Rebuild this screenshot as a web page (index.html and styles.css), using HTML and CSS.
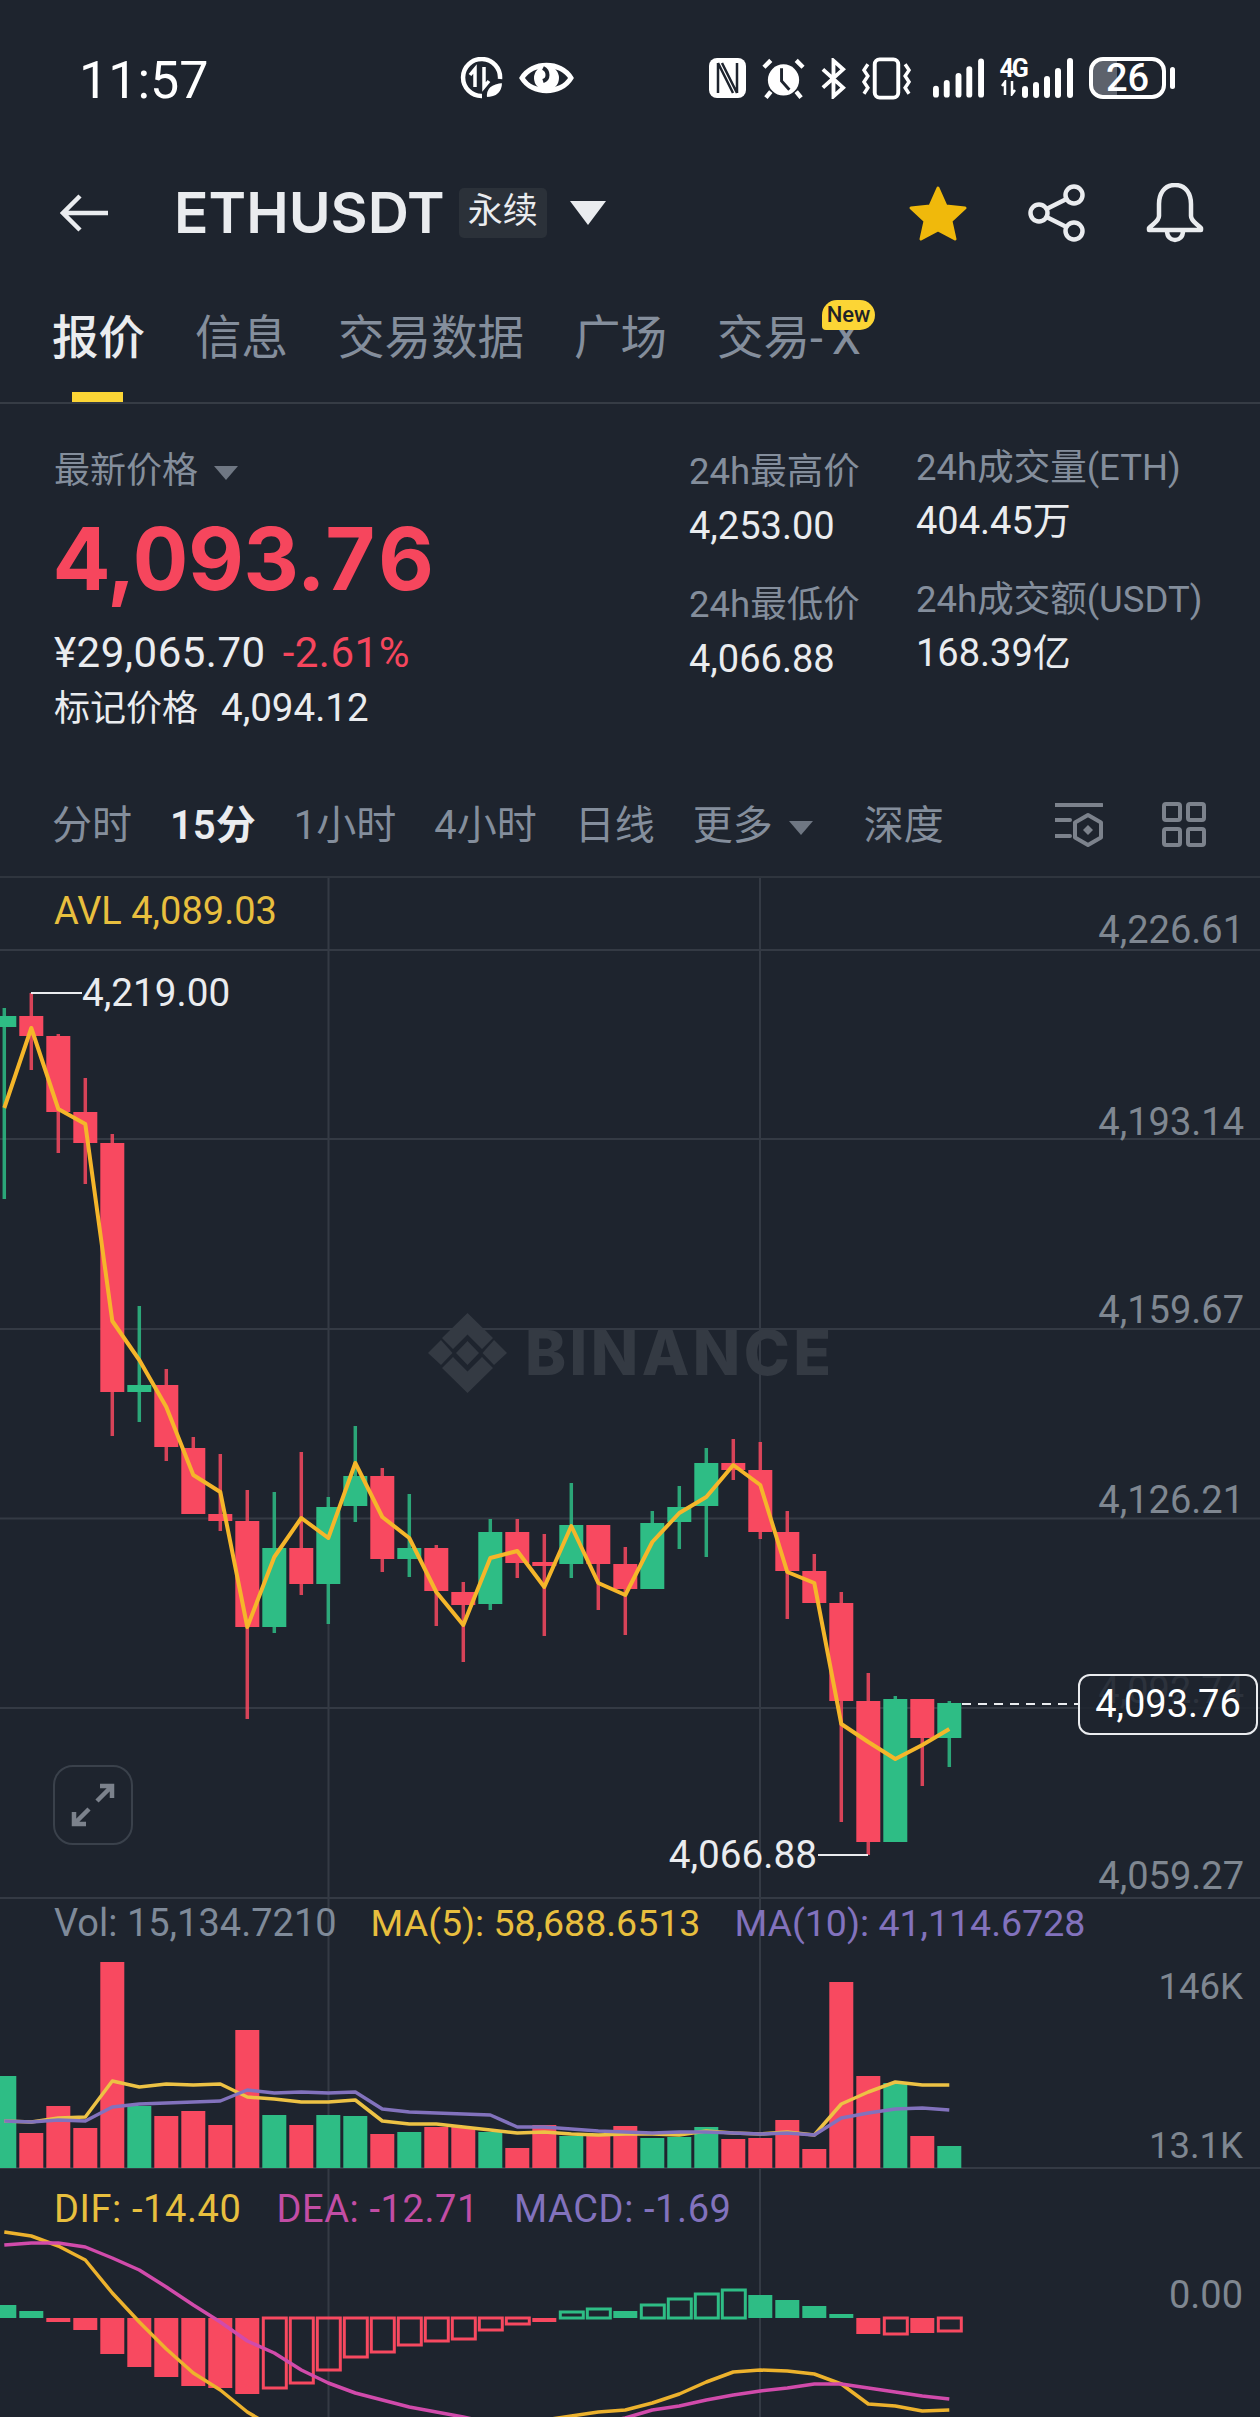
FILE: index.html
```html
<!DOCTYPE html>
<html lang="zh">
<head>
  <meta charset="UTF-8">
  <title>ETHUSDT</title>
  <link rel="stylesheet" href="styles.css">
</head>
<body>

  <div class="status-bar">
    <span class="time">11:57</span>
    <div class="status-left">
      <svg width="44" height="42" viewBox="0 0 44 42" fill="none" stroke="#fff" stroke-width="4.500">
        <path d="M22 39A18.500 18.500 0 1 1 40 22"/>
        <path d="M15 30V12L10 18M24 10V30L29 24" stroke-width="3.500"/>
        <path d="M26 41C25 31 31 26 43 25C43 35 37 41 26 41Z" fill="#fff" stroke="#1e242e" stroke-width="2"/>
      </svg>
      <svg width="55" height="36" viewBox="0 0 55 36">
        <path d="M3 18C13 1 42 1 52 18C42 35 13 35 3 18Z" fill="none" stroke="#fff" stroke-width="5"/>
        <circle cx="27.500" cy="18" r="12.500" fill="#fff"/>
        <path d="M24 8C30 11 30 19 24 21" fill="none" stroke="#1e242e" stroke-width="4"/>
      </svg>
    </div>
    <div class="status-right">
      <svg width="37" height="40" viewBox="0 0 37 40">
        <rect width="37" height="40" rx="8" fill="#fff"/>
        <path d="M9 5V35M9 5L24 35M13 5L28 35M28 5V35" fill="none" stroke="#1e242e" stroke-width="2.500"/>
      </svg>
      <svg width="43" height="41" viewBox="0 0 44 41" fill="none" stroke="#fff" stroke-width="4.500">
        <circle cx="22" cy="22" r="16" fill="#fff" stroke="none"/>
        <path d="M20 10V23L28 32" stroke="#1e242e" stroke-width="3"/>
        <path d="M2 9L9 2M35 2L42 9M9 34L4 40M35 34L40 40"/>
      </svg>
      <svg width="26" height="41" viewBox="0 0 27 41" fill="none" stroke="#fff" stroke-width="4">
        <path d="M3 11L24 30L14 39V2L24 11L3 30"/>
      </svg>
      <svg width="49" height="43" viewBox="0 0 50 43" fill="none" stroke="#fff" stroke-width="3.500">
        <rect x="13" y="2" width="24" height="39" rx="5" stroke-width="4"/>
        <path d="M6 7L2 13L6 19L2 25L6 31L2 37M44 7L48 13L44 19L48 25L44 31L48 37"/>
      </svg>
      <svg class="signal" width="51" height="40" viewBox="0 0 52 40" fill="#fff">
        <rect x="0" y="28" width="6" height="12" rx="3"/>
        <rect x="11" y="22" width="6" height="18" rx="3"/>
        <rect x="23" y="15" width="6" height="25" rx="3"/>
        <rect x="34" y="8" width="6" height="32" rx="3"/>
        <rect x="46" y="0" width="6" height="40" rx="3"/>
      </svg>
      <div class="network">
        <div class="net-stack">
          <span class="net-type">4G</span>
          <svg width="17" height="16" viewBox="0 0 17 16" fill="none" stroke="#fff" stroke-width="2.500">
            <path d="M5 15V2L2 6M12 1V14L15 10"/>
          </svg>
        </div>
        <svg width="51" height="40" viewBox="0 0 51 40" fill="#fff">
          <rect x="0" y="28" width="6" height="12" rx="3"/>
          <rect x="11" y="24" width="6" height="16" rx="3"/>
          <rect x="22" y="18" width="6" height="22" rx="3"/>
          <rect x="33" y="10" width="6" height="30" rx="3"/>
          <rect x="45" y="0" width="6" height="40" rx="3"/>
        </svg>
      </div>
      <div class="battery">26</div>
    </div>
  </div>

  <header class="header">
    <svg class="back" width="48" height="38" viewBox="0 0 48 38" fill="none" stroke="#eaecef" stroke-width="4.500">
      <path d="M48 19H3M20 2L3 19L20 36"/>
    </svg>
    <h1>ETHUSDT</h1>
    <span class="badge">永续</span>
    <span class="caret caret-title"></span>
    <div class="header-actions">
      <svg width="60" height="57" viewBox="0 0 60 57">
        <path d="M30 3L38 21L57 23L43 36L47 54L30 45L13 54L17 36L3 23L22 21Z" fill="#f0b90b" stroke="#f0b90b" stroke-width="3" stroke-linejoin="round"/>
      </svg>
      <svg width="58" height="58" viewBox="0 0 58 58" fill="none" stroke="#eaecef" stroke-width="4.500">
        <circle cx="46" cy="11" r="8.500"/>
        <circle cx="11" cy="29" r="8.500"/>
        <circle cx="46" cy="47" r="8.500"/>
        <path d="M18.500 25L38.500 15M18.500 33L38.500 43"/>
      </svg>
      <svg width="58" height="60" viewBox="0 0 58 60" fill="none" stroke="#eaecef" stroke-width="4.500">
        <path d="M29 2C18 2 13 11 13 21V33C13 38 8 40 3 45V47H55V45C50 40 45 38 45 33V21C45 11 40 2 29 2Z" stroke-linejoin="round"/>
        <path d="M21 48C21 60 37 60 37 48"/>
      </svg>
    </div>
  </header>

  <nav class="tabs">
    <span class="tab active">报价</span>
    <span class="tab">信息</span>
    <span class="tab">交易数据</span>
    <span class="tab">广场</span>
    <span class="tab">交易<span class="tab-x">-X</span><em class="new">New</em></span>
  </nav>

  <section class="quote">
    <div class="quote-main">
      <div class="price-label">最新价格<span class="caret caret-small"></span></div>
      <div class="last-price">4,093.76</div>
      <div class="sub-price">¥29,065.70<span class="change">-2.61%</span></div>
      <div class="mark-price">标记价格<span class="mark-value">4,094.12</span></div>
    </div>
    <div class="stats stats-a">
      <div class="stat-label">24h最高价</div>
      <div class="stat-value">4,253.00</div>
      <div class="stat-label">24h最低价</div>
      <div class="stat-value">4,066.88</div>
    </div>
    <div class="stats stats-b">
      <div class="stat-label">24h成交量(ETH)</div>
      <div class="stat-value">404.45万</div>
      <div class="stat-label">24h成交额(USDT)</div>
      <div class="stat-value">168.39亿</div>
    </div>
  </section>

  <div class="toolbar">
    <span>分时</span>
    <span class="current">15分</span>
    <span>1小时</span>
    <span>4小时</span>
    <span>日线</span>
    <span class="more">更多<span class="caret caret-small"></span></span>
    <span class="depth">深度</span>
    <div class="toolbar-icons">
      <svg width="48" height="46" viewBox="0 0 48 46" fill="none" stroke="#7c828c" stroke-width="4">
        <path d="M0 3H47M0 18H15M0 34H15" stroke-linecap="round"/>
        <path d="M33 13L46 20.500V35.500L33 43L20 35.500V20.500Z" stroke-linejoin="round"/>
        <path d="M33 23L38 28L33 33L28 28Z" fill="#7c828c" stroke="none"/>
      </svg>
      <svg width="44" height="45" viewBox="0 0 44 45" fill="none" stroke="#7c828c" stroke-width="4">
        <rect x="2" y="2" width="16" height="16" rx="2"/>
        <rect x="26" y="2" width="16" height="16" rx="2"/>
        <rect x="2" y="27" width="16" height="16" rx="2"/>
        <rect x="26" y="27" width="16" height="16" rx="2"/>
      </svg>
    </div>
  </div>

  <main class="chart">
    <svg id="plot" class="plot" viewBox="0 878 1260 1539"></svg>

    <div class="pane pane-kline">
      <div class="legend avl">AVL 4,089.03</div>
      <div class="expand">
        <svg width="46" height="46" viewBox="0 0 46 46" fill="none" stroke="#7c828c" stroke-width="4.500">
          <path d="M27 19L42 4M30 4H42V16M19 27L4 42M4 30V42H16"/>
        </svg>
      </div>
      <div class="last-box">4,093.76</div>
    </div>

    <div class="pane pane-vol">
      <div class="legend">
        <span class="c-grey">Vol: 15,134.7210</span>
        <span class="ma c-yellow">MA(5): 58,688.6513</span>
        <span class="ma c-purple">MA(10): 41,114.6728</span>
      </div>
    </div>

    <div class="pane pane-macd">
      <div class="legend">
        <span class="c-yellow">DIF: -14.40</span>
        <span class="c-pink">DEA: -12.71</span>
        <span class="c-purple">MACD: -1.69</span>
      </div>
    </div>
  </main>

  <script src="chart.js"></script>

</body>
</html>
```

FILE: styles.css
```css
* {
  box-sizing: border-box;
}

body {
  margin: 0;
  width: 1260px;
  height: 2417px;
  overflow: hidden;
  background: #1e242e;
  color: #eaecef;
  font-family: Roboto, "Noto Sans CJK SC", sans-serif;
}

/* status bar */
.status-bar {
  display: flex;
  align-items: center;
  height: 156px;
  padding-left: 79px;
}

.time {
  width: 126px;
  padding-top: 4px;
  font-size: 52px;
  color: #fff;
}

.status-left {
  display: flex;
  align-items: center;
  gap: 15px;
  margin-left: 255px;
}

.status-right {
  display: flex;
  align-items: center;
  margin-left: 135px;
  gap: 15.500px;
}

.status-right .signal {
  margin-left: 7px;
}

.network {
  display: flex;
  align-items: flex-end;
}

.net-stack {
  display: flex;
  flex-direction: column;
  align-items: flex-start;
  width: 22px;
  height: 40px;
}

.net-type {
  color: #fff;
  font-size: 25px;
  font-weight: 700;
  line-height: 22px;
  letter-spacing: -2px;
  white-space: nowrap;
}

.battery {
  position: relative;
  width: 77px;
  height: 42px;
  margin-left: 1px;
  border: 4px solid #fff;
  border-radius: 14px;
  background: linear-gradient(to right, #5d626c 35%, transparent 35%);
  background-clip: padding-box;
  color: #fff;
  font-size: 38px;
  font-weight: 500;
  line-height: 34px;
  text-align: center;
}

.battery::after {
  content: "";
  position: absolute;
  top: 6px;
  right: -13px;
  width: 5px;
  height: 22px;
  border-radius: 3px;
  background: #fff;
}

/* header */
.header {
  display: flex;
  align-items: center;
  height: 114px;
  padding-left: 60px;
}

.header h1 {
  margin: 0 0 0 66px;
  font-family: Inter, sans-serif;
  font-size: 57px;
  font-weight: 600;
  line-height: 60px;
}

.badge {
  margin-left: 14px;
  padding: 0 9px;
  height: 50px;
  border-radius: 5px;
  background: #2b3139;
  font-size: 35px;
  line-height: 48px;
}

.caret {
  display: inline-block;
  width: 0;
  height: 0;
  border-style: solid;
  border-color: #eaecef transparent transparent;
}

.caret-title {
  margin-left: 23px;
  border-width: 24px 18px 0;
}

.caret-small {
  margin-left: 16px;
  border-width: 14px 12px 0;
  border-top-color: #6f7783;
  vertical-align: middle;
}

.header-actions {
  display: flex;
  align-items: center;
  gap: 60px;
  margin-left: auto;
  padding-right: 56px;
}

/* tabs */
.tabs {
  display: flex;
  gap: 50px;
  height: 134px;
  padding: 41px 0 0 52px;
  border-bottom: 2px solid #363c45;
}

.tab {
  position: relative;
  height: 54px;
  font-size: 46.500px;
  line-height: 54px;
  color: #848e9c;
}

.tab.active {
  color: #eaecef;
  font-weight: 500;
}

.tab.active::after {
  content: "";
  position: absolute;
  left: 20px;
  top: 81px;
  width: 51px;
  height: 10px;
  background: #fcd535;
}

.tab-x {
  letter-spacing: 9px;
}

.new {
  position: absolute;
  right: -5px;
  top: -11px;
  width: 53px;
  height: 30px;
  border-radius: 15px 15px 15px 4px;
  background: #fcd535;
  color: #1e2329;
  font-size: 22px;
  font-style: normal;
  font-weight: 500;
  line-height: 30px;
  text-align: center;
}

/* quote */
.quote {
  display: flex;
  height: 369px;
  padding-left: 54px;
}

.quote-main {
  width: 635px;
  padding-top: 47px;
}

.price-label {
  font-size: 36px;
  line-height: 40px;
  color: #848e9c;
}

.last-price {
  margin-top: 23px;
  font-family: Inter, sans-serif;
  font-size: 86px;
  font-variant-numeric: tabular-nums;
  font-weight: 700;
  line-height: 90px;
  color: #f6465d;
}

.sub-price {
  margin-top: 29px;
  font-size: 42px;
  letter-spacing: 0.500px;
  line-height: 40px;
}

.change {
  margin-left: 17px;
  color: #f6465d;
}

.mark-price {
  margin-top: 15px;
  font-size: 36px;
  line-height: 40px;
}

.mark-value {
  margin-left: 23px;
  font-size: 38.500px;
}

.stats {
  display: flex;
  flex-direction: column;
}

.stats-a {
  width: 227px;
  padding-top: 48px;
}

.stats-a .stat-value {
  padding-top: 1px;
}

.stats-b {
  padding-top: 44px;
}

.stat-label {
  font-size: 36.500px;
  line-height: 40px;
  color: #848e9c;
}

.stat-value {
  margin: 13px 0 39px;
  font-size: 38px;
  line-height: 40px;
}

/* interval toolbar */
.toolbar {
  display: flex;
  align-items: center;
  gap: 38px;
  height: 105px;
  padding: 0 54px 5px 52px;
  border-bottom: 2px solid #2f353e;
  font-size: 40px;
  color: #848e9c;
}

.toolbar .current {
  color: #eaecef;
  font-weight: 600;
}

.toolbar .depth {
  margin-left: 13px;
}

.toolbar-icons {
  display: flex;
  align-items: center;
  gap: 59px;
  margin-left: auto;
  padding-top: 5px;
}

/* chart */
.chart {
  position: relative;
  height: 1539px;
  overflow: hidden;
}

.plot {
  position: absolute;
  top: 0;
  left: 0;
  width: 1260px;
  height: 1539px;
}

.pane {
  position: relative;
}

.pane-kline {
  height: 1020px;
}

.pane-vol {
  height: 270px;
}

.pane-macd {
  height: 249px;
}

.legend {
  display: flex;
  padding: 3px 0 0 54px;
  gap: 34px;
  font-size: 38px;
  line-height: 44px;
}

.legend .ma {
  font-size: 37.500px;
}

.pane-kline .legend {
  padding-top: 11px;
  font-size: 38px;
}

.pane-macd .legend {
  gap: 35px;
  padding-top: 19px;
  letter-spacing: 0.600px;
}

.avl,
.c-yellow {
  color: #e8bf3e;
}

.c-grey {
  color: #7f8a99;
}

.c-purple {
  color: #8272bd;
}

.c-pink {
  color: #c24da5;
}

.expand {
  position: absolute;
  left: 53px;
  top: 887px;
  display: flex;
  align-items: center;
  justify-content: center;
  width: 80px;
  height: 80px;
  border: 2px solid #3a414b;
  border-radius: 20px;
}

.last-box {
  position: absolute;
  left: 1078px;
  top: 796px;
  width: 180px;
  height: 61px;
  border: 2px solid #eaecef;
  border-radius: 12px;
  background: rgba(30, 36, 46, 0.86);
  color: #fff;
  font-size: 38px;
  line-height: 57px;
  text-align: center;
}

.axis {
  fill: #7f8791;
  font-size: 38px;
  text-anchor: end;
}

.axis-small {
  font-size: 36.500px;
}

.marker {
  fill: #eaecef;
  font-size: 38.700px;
}

.watermark {
  fill: #343a43;
  font-family: Inter, sans-serif;
  font-size: 62px;
  font-weight: 800;
}
```

FILE: chart.js
```js
const RED = '#f84960';
const GREEN = '#2ebd85';
const GRID = '#343a44';
const BAR = 24;

// top of body, bottom of body, top of wick, bottom of wick, colour
const candles = [
  [1016, 1027, 1008, 1199, 'g'], [1016, 1036, 993, 1070, 'r'], [1036, 1112, 1034, 1153, 'r'],
  [1112, 1143, 1078, 1184, 'r'], [1143, 1392, 1134, 1436, 'r'], [1385, 1392, 1306, 1422, 'g'],
  [1385, 1447, 1369, 1461, 'r'], [1448, 1514, 1437, 1514, 'r'], [1514, 1521, 1454, 1531, 'r'],
  [1521, 1627, 1490, 1719, 'r'], [1548, 1627, 1492, 1633, 'g'], [1548, 1584, 1452, 1595, 'r'],
  [1507, 1584, 1497, 1624, 'g'], [1476, 1506, 1426, 1522, 'g'], [1476, 1559, 1468, 1572, 'r'],
  [1548, 1559, 1494, 1577, 'g'], [1548, 1591, 1545, 1626, 'r'], [1592, 1605, 1582, 1662, 'r'],
  [1532, 1604, 1519, 1610, 'g'], [1532, 1563, 1519, 1578, 'r'], [1562, 1566, 1534, 1636, 'r'],
  [1525, 1564, 1483, 1578, 'g'], [1525, 1564, 1525, 1610, 'r'], [1564, 1589, 1547, 1635, 'r'],
  [1523, 1589, 1511, 1589, 'g'], [1507, 1522, 1486, 1549, 'g'], [1463, 1506, 1448, 1557, 'g'],
  [1463, 1470, 1439, 1480, 'r'], [1470, 1532, 1442, 1539, 'r'], [1532, 1571, 1511, 1619, 'r'],
  [1571, 1603, 1554, 1603, 'r'], [1603, 1701, 1592, 1822, 'r'], [1701, 1842, 1673, 1855, 'r'],
  [1699, 1842, 1696, 1842, 'g'], [1699, 1738, 1699, 1786, 'r'], [1703, 1738, 1701, 1767, 'g']
];

const avg = [1108, 1028, 1109, 1124, 1321, 1360, 1407, 1475, 1492, 1627, 1557, 1518, 1538, 1463, 1517, 1538, 1592, 1625,
  1558, 1551, 1587, 1526, 1583, 1595, 1542, 1513, 1497, 1465, 1485, 1572, 1583, 1724, 1742, 1759, 1745, 1729];

const volumes = [2076, 2133, 2106, 2128, 1962, 2106, 2116, 2111, 2125, 2030, 2115, 2125, 2115, 2116, 2134, 2132, 2127, 2127,
  2132, 2148, 2125, 2136, 2135, 2126, 2138, 2137, 2127, 2139, 2138, 2120, 2149, 1982, 2076, 2083, 2136, 2146];

const ma5 = [2121, 2122, 2118, 2117, 2081, 2087, 2084, 2085, 2084, 2097, 2099, 2102, 2102, 2100, 2121, 2124, 2124, 2127,
  2130, 2133, 2132, 2134, 2135, 2134, 2134, 2135, 2131, 2133, 2134, 2132, 2135, 2104, 2092, 2082, 2085, 2085];

const ma10 = [2121, 2122, 2120, 2121, 2107, 2104, 2103, 2102, 2101, 2090, 2093, 2092, 2093, 2092, 2109, 2112, 2113, 2114,
  2115, 2127, 2127, 2129, 2131, 2132, 2133, 2132, 2132, 2133, 2134, 2133, 2135, 2118, 2113, 2109, 2108, 2110];

// value end of each macd bar, true = hollow
const MACD_ZERO = 2318;
const macd = [[2305], [2311], [2322], [2330], [2354], [2367], [2377], [2386], [2388], [2394],
  [2388, true], [2383, true], [2370, true], [2357, true], [2352, true], [2345, true], [2341, true], [2339, true],
  [2330, true], [2324, true], [2322], [2312, true], [2309, true], [2311], [2305, true], [2299, true], [2294, true],
  [2290, true], [2295], [2300], [2306], [2314], [2334], [2334, true], [2333], [2331, true]];

const dif = [2232, 2236, 2246, 2260, 2293, 2322, 2349, 2373, 2390, 2412, 2428, 2440, 2450, 2456, 2458, 2456, 2450, 2440,
  2432, 2426, 2420, 2416, 2412, 2410, 2403, 2394, 2382, 2372, 2370, 2371, 2374, 2384, 2404, 2406, 2411, 2410];

const dea = [2245, 2243, 2243, 2247, 2258, 2270, 2287, 2305, 2322, 2341, 2353, 2370, 2383, 2393, 2400, 2407, 2412, 2417,
  2423, 2427, 2430, 2427, 2423, 2418, 2410, 2406, 2400, 2395, 2391, 2388, 2384, 2384, 2388, 2392, 2396, 2399];

const centre = i => 4.3 + 27 * i;
const plot = document.getElementById('plot');

function add(tag, attrs, text) {
  const el = document.createElementNS('http://www.w3.org/2000/svg', tag);
  for (const k in attrs) el.setAttribute(k, attrs[k]);
  if (text) el.textContent = text;
  plot.appendChild(el);
  return el;
}

function line(x1, y1, x2, y2, stroke, width, extra) {
  add('line', { x1, y1, x2, y2, stroke, 'stroke-width': width, ...extra });
}

function polyline(ys, stroke, width) {
  const points = ys.map((y, i) => centre(i) + ',' + y).join(' ');
  add('polyline', { points, stroke, fill: 'none', 'stroke-width': width, 'stroke-linejoin': 'round' });
}

// grid
[950, 1139, 1329, 1518.5, 1708, 1898].forEach(y => line(0, y, 1260, y, GRID, 2));
line(0, 2168, 1260, 2168, GRID, 2);
[328.5, 760].forEach(x => line(x, 878, x, 2417, GRID, 2));

// watermark
add('g', { id: 'logo', fill: '#343a43', transform: 'translate(428 1313)' });
const logo = document.getElementById('logo');
['39.500,0 65,25 54,36 39.500,21.500 25,36 14,25',
 '13,27 24.500,40 13,52 0,40',
 '39.500,28 51,40 39.500,52 28,40',
 '66,27 79,40 66,52 54.500,40',
 '39.500,80 14,55 25,44 39.500,58.500 54,44 65,55'].forEach(points => {
  const p = document.createElementNS('http://www.w3.org/2000/svg', 'polygon');
  p.setAttribute('points', points);
  logo.appendChild(p);
});
add('text', { x: 525, y: 1375, class: 'watermark', textLength: 306 }, 'BINANCE');

// axis labels
[[4226.61, 943], [4193.14, 1135], [4159.67, 1323], [4126.21, 1513], [4092.74, 1703], [4059.27, 1889]].forEach(([v, y]) => {
  add('text', { x: 1244, y, class: 'axis' }, v.toLocaleString('en-US', { minimumFractionDigits: 2 }));
});
add('text', { x: 1243, y: 1999, class: 'axis axis-small' }, '146K');
add('text', { x: 1243, y: 2158, class: 'axis axis-small' }, '13.1K');
add('text', { x: 1243, y: 2308, class: 'axis' }, '0.00');

// candles
candles.forEach(([top, bottom, wickTop, wickBottom, c], i) => {
  const color = c === 'g' ? GREEN : RED;
  const x = centre(i);
  line(x, wickTop, x, wickBottom, color, 3.5, { opacity: 0.85 });
  add('rect', { x: x - BAR / 2, y: top, width: BAR, height: bottom - top, fill: color });
});
polyline(avg, '#f5b62a', 4);

// high / low markers
line(31, 993, 82, 993, '#eaecef', 2);
add('text', { x: 82, y: 1006, class: 'marker' }, '4,219.00');
line(818, 1855, 868, 1855, '#eaecef', 2);
add('text', { x: 817, y: 1868, class: 'marker', 'text-anchor': 'end' }, '4,066.88');
line(962, 1704, 1078, 1704, '#eaecef', 2, { 'stroke-dasharray': '9 7' });

// volume
volumes.forEach((top, i) => {
  const color = candles[i][4] === 'g' ? GREEN : RED;
  add('rect', { x: centre(i) - BAR / 2, y: top, width: BAR, height: 2168 - top, fill: color });
});
polyline(ma5, '#edc245', 3.5);
polyline(ma10, '#8272bd', 3.5);

// macd
macd.forEach(([end, hollow], i) => {
  const top = Math.min(end, MACD_ZERO);
  const height = Math.abs(end - MACD_ZERO);
  const color = end < MACD_ZERO ? GREEN : RED;
  if (hollow) {
    add('rect', { x: centre(i) - BAR / 2 + 1, y: top, width: BAR - 1, height, fill: 'none', stroke: color, 'stroke-width': 3 });
  } else {
    add('rect', { x: centre(i) - BAR / 2, y: top, width: BAR, height, fill: color });
  }
});
polyline(dif, '#edb22d', 3.5);
polyline(dea, '#d14bab', 3.5);
```
